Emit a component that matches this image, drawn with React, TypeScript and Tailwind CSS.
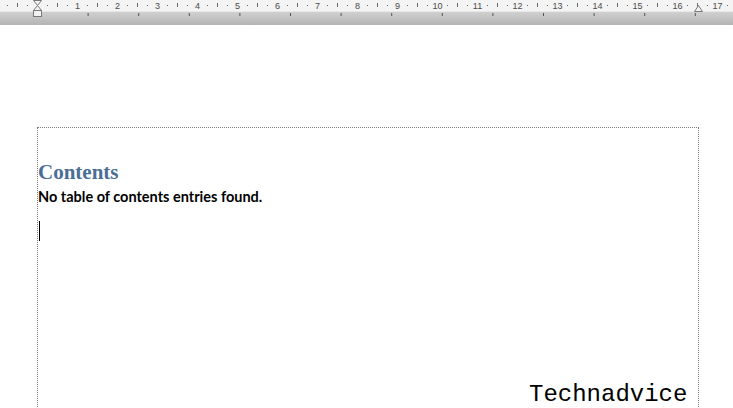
import React from 'react';

const CM = 40;
const ORIGIN = 37.5;

const Ruler = () => {
  const nums = Array.from({ length: 18 }, (_, i) => i);
  const tabs = Array.from({ length: 13 }, (_, i) => ORIGIN + 50.6 * (i + 1));
  return (
    <div className="relative h-[25px] bg-gradient-to-b from-[#f4f4f4] from-45% via-[#d0d0d0] via-48% to-[#b4b4b4]">
      <svg width="733" height="25" className="absolute inset-0">
        {nums.map((n) => {
          const x = ORIGIN + n * CM;
          return (
            <g key={n}>
              {n > 0 && (
                <text x={x} y={9} textAnchor="middle" fontSize="9" fill="#4a4a4a" fontFamily="Liberation Sans, Arial, sans-serif">
                  {n}
                </text>
              )}
              <rect x={x + CM * 0.25 - 0.5} y={5} width={1} height={1} fill="#6a6a6a" />
              <rect x={x + CM * 0.5 - 0.5} y={3} width={1} height={4} fill="#6a6a6a" />
              <rect x={x + CM * 0.75 - 0.5} y={5} width={1} height={1} fill="#6a6a6a" />
              {n === 0 && (
                <>
                  <rect x={x - CM * 0.25 - 0.5} y={5} width={1} height={1} fill="#6a6a6a" />
                  <rect x={x - CM * 0.5 - 0.5} y={3} width={1} height={4} fill="#6a6a6a" />
                  <rect x={x - CM * 0.75 - 0.5} y={5} width={1} height={1} fill="#6a6a6a" />
                </>
              )}
            </g>
          );
        })}
        {tabs.map((x) => (
          <rect key={x} x={x - 0.5} y={13} width={1} height={3} fill="#555" />
        ))}
        {/* left indent markers */}
        <path d="M33.5 0.5 L41.5 0.5 L37.5 5.5 Z" fill="#f2f2f2" stroke="#7a7a7a" />
        <path d="M37.5 5.5 L41.5 10.5 L33.5 10.5 Z" fill="#f2f2f2" stroke="#7a7a7a" />
        <rect x="33.5" y="10.5" width="8" height="6" fill="#f2f2f2" stroke="#7a7a7a" />
        {/* right indent marker */}
        <path d="M698.5 5.5 L702.5 11.5 L694.5 11.5 Z" fill="#f2f2f2" stroke="#7a7a7a" />
      </svg>
    </div>
  );
}

export default function App() {
  return (
    <div className="relative w-[733px] h-[408px] overflow-hidden bg-white">
      <Ruler />
      <div className="ml-[37px] mt-[102px] w-[662px] h-[300px] border-t border-l border-r border-dotted border-[#7c7c7c]">
        <h1 className="mt-[33px] text-[21px] leading-[23px] font-bold text-[#4a6f96] font-['Liberation_Serif','Times_New_Roman',serif]">
          Contents
        </h1>
        <p className="mt-[4px] text-[14.5px] leading-[18px] font-bold text-black font-['Lato','Open_Sans',sans-serif]">
          No table of contents entries found.
        </p>
        <div className="mt-[15px] ml-[1px] w-px h-[20px] bg-black" />
      </div>
      <div className="absolute left-[529px] top-[382px] text-[24px] leading-[26px] text-black font-['Liberation_Mono','Courier_New',monospace]">
        Technadvice
      </div>
    </div>
  );
}
